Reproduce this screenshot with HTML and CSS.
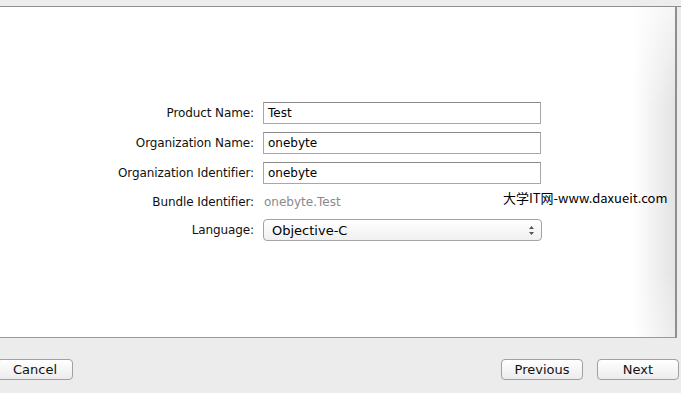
FILE: index.html
```html
<!DOCTYPE html>
<html lang="en">
<head>
  <meta charset="UTF-8">
  <title>New Project Options</title>
  <link rel="stylesheet" href="styles.css">
</head>
<body>
<div class="top-strip"></div>
<div class="panel">
  <div class="shade"></div>
  <form class="options">
    <div class="row">
      <label class="label">Product Name:</label>
      <div class="field">Test</div>
    </div>
    <div class="row">
      <label class="label">Organization Name:</label>
      <div class="field">onebyte</div>
    </div>
    <div class="row">
      <label class="label">Organization Identifier:</label>
      <div class="field">onebyte</div>
    </div>
    <div class="row row-plain">
      <label class="label">Bundle Identifier:</label>
      <div class="value">onebyte.Test</div>
      <span class="watermark">大学IT网-www.daxueit.com</span>
    </div>
    <div class="row">
      <label class="label">Language:</label>
      <div class="popup">
        <span>Objective-C</span>
        <span class="arrows">
          <svg width="7" height="11" viewBox="0 0 7 11"><path d="M3.5 1 L6 4 H1 Z M3.5 10 L6 7 H1 Z" fill="#555"/></svg>
        </span>
      </div>
    </div>
  </form>
</div>
<div class="footer">
  <button class="btn btn-cancel">Cancel</button>
  <div class="nav">
    <button class="btn">Previous</button>
    <button class="btn">Next</button>
  </div>
</div>
</body>
</html>
```

FILE: styles.css
```css
html, body {
  margin: 0;
  height: 100%;
}

body {
  width: 681px;
  height: 393px;
  overflow: hidden;
  background: #ececec;
  font-family: "DejaVu Sans", "Noto Sans CJK SC", sans-serif;
  font-size: 12px;
  color: #222;
  display: flex;
  flex-direction: column;
}

.top-strip {
  height: 6px;
  background: #ededed;
  border-bottom: 1px solid #8f8f8f;
}

.panel {
  position: relative;
  height: 331px;
  width: 677px;
  background: #fff;
  border-right: 2px solid #8f8f8f;
  border-bottom: 1px solid #9a9a9a;
  box-sizing: border-box;
  padding-top: 95px;
}

.shade {
  position: absolute;
  top: 0;
  right: 0;
  bottom: 0;
  width: 42px;
  background: linear-gradient(to right, rgba(0,0,0,0), rgba(0,0,0,0.11));
  -webkit-mask-image: linear-gradient(to bottom, rgba(0,0,0,0.35), #000 30%, #000 80%, rgba(0,0,0,0.7));
  pointer-events: none;
}

.options {
  position: relative;
  display: flex;
  flex-direction: column;
  gap: 8px;
}

.row {
  display: flex;
  align-items: center;
  gap: 9px;
  height: 22px;
}

.row-plain {
  height: 19px;
}

.label {
  width: 254px;
  text-align: right;
  color: #111;
  letter-spacing: -0.1px;
}

.field {
  width: 278px;
  height: 22px;
  box-sizing: border-box;
  border: 1px solid #a8a8a8;
  border-top-color: #8a8a8a;
  padding: 3px 4px;
  background: #fff;
  color: #000;
}

.value {
  color: #8a8a8a;
  padding-left: 1px;
}

.watermark {
  position: absolute;
  left: 503px;
  top: 86px;
  font-family: "Noto Sans CJK SC", sans-serif;
  font-size: 13px;
  color: #000;
}

.popup {
  width: 279px;
  height: 22px;
  box-sizing: border-box;
  border: 1px solid #a3a3a3;
  border-radius: 4px;
  background: linear-gradient(#ffffff, #f0f0f0);
  display: flex;
  align-items: center;
  justify-content: space-between;
  padding: 0 6px 0 8px;
  font-size: 13px;
  color: #000;
}

.arrows {
  display: flex;
}

.footer {
  flex: 1;
  display: flex;
  justify-content: space-between;
  align-items: flex-start;
  padding-top: 21px;
}

.nav {
  display: flex;
  gap: 14px;
  margin-right: 2px;
}

.btn {
  height: 21px;
  width: 82px;
  border: 1px solid #a0a0a0;
  border-radius: 4px;
  background: linear-gradient(#ffffff, #ececec);
  font-family: "DejaVu Sans", sans-serif;
  font-size: 13px;
  color: #111;
  padding: 0;
}

.btn-cancel {
  width: 76px;
  margin-left: -3px;
}
```
